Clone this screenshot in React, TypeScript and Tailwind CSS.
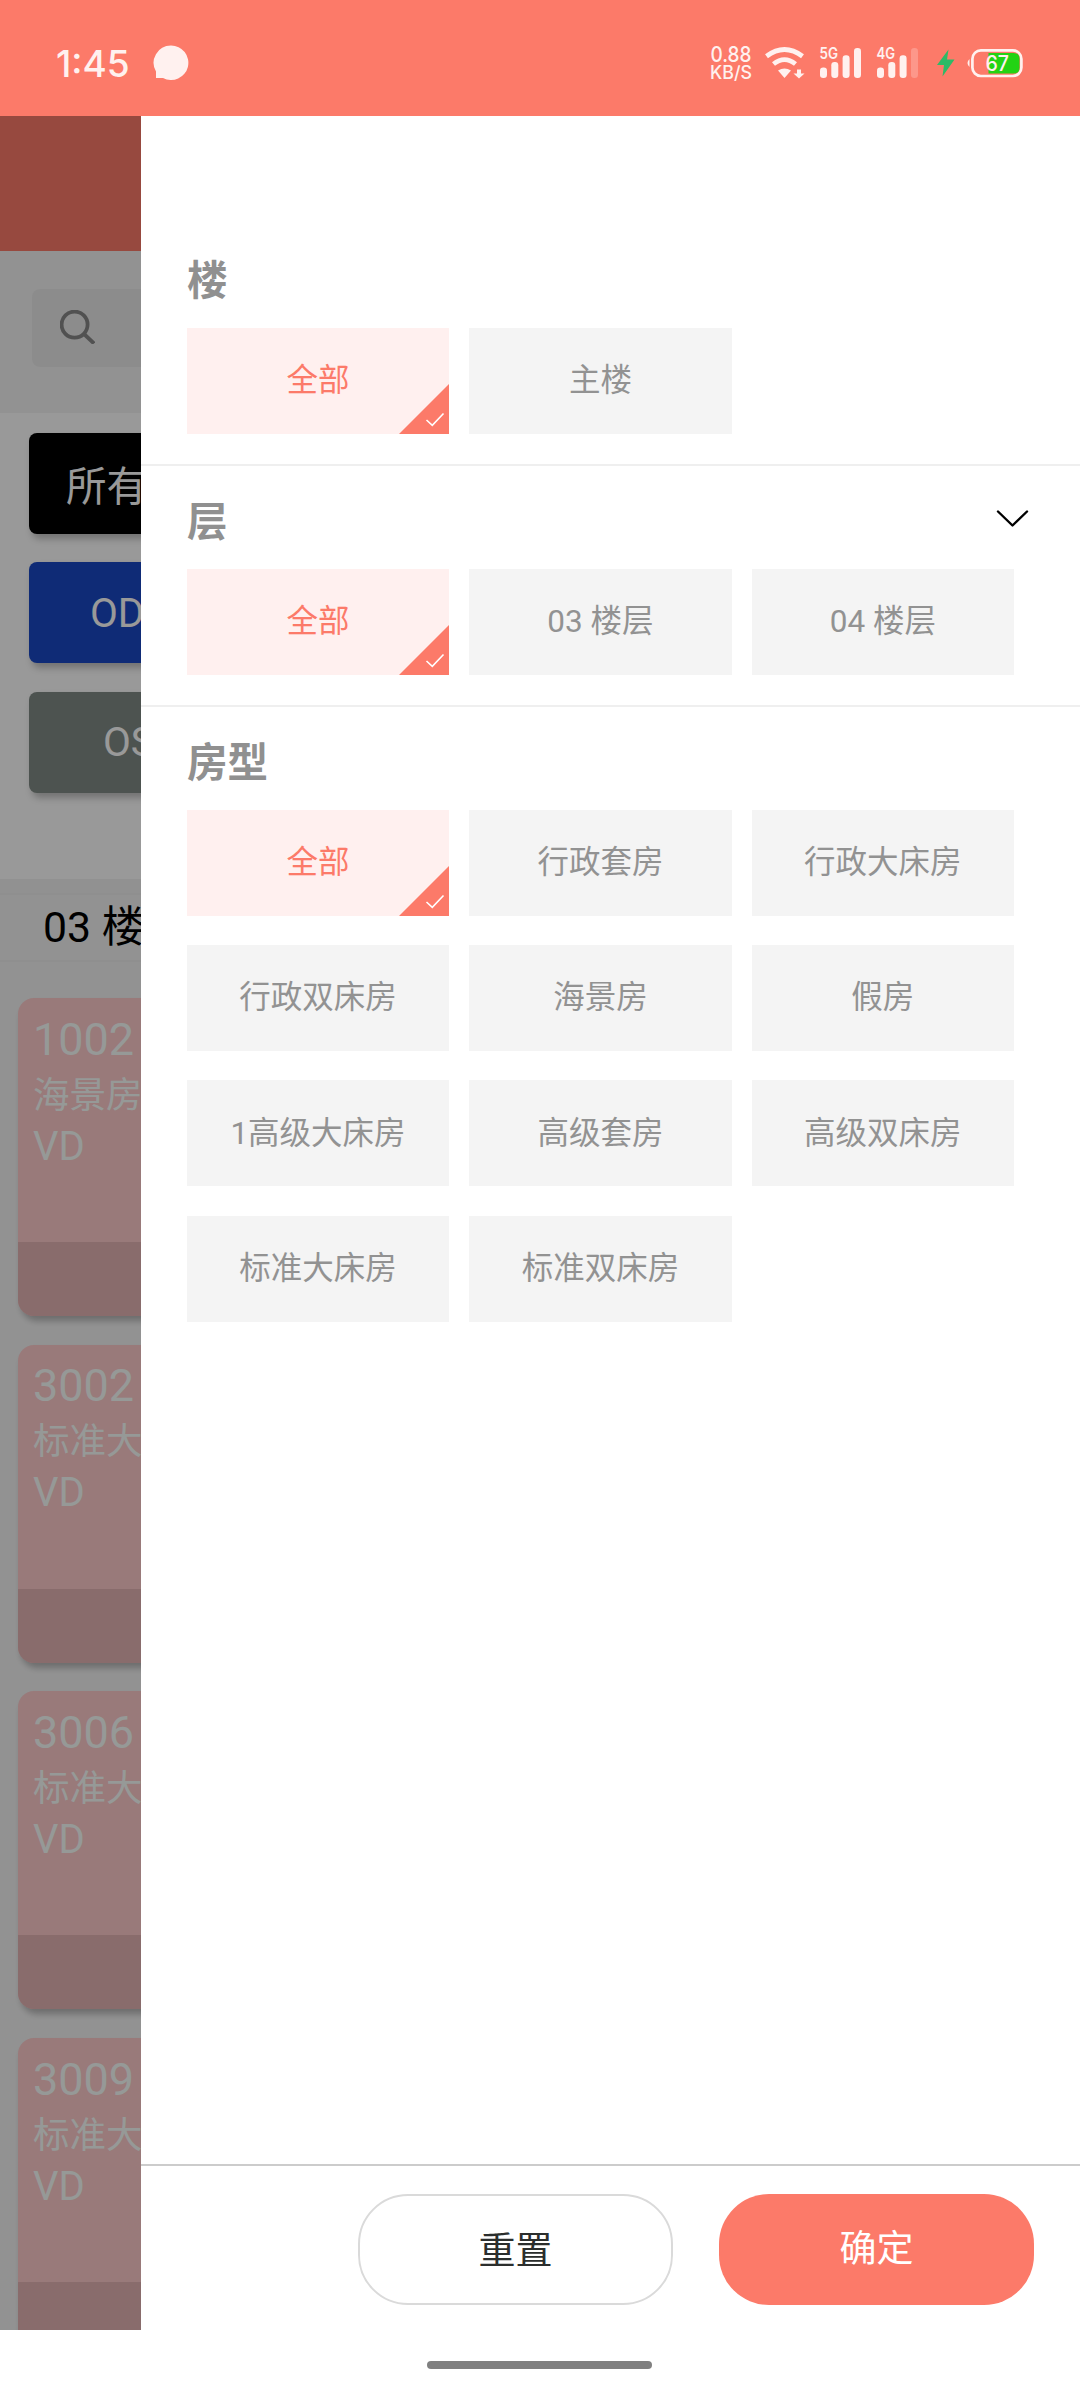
import React, { useState } from "react";

const statusFilters = [
  { label: "所有", className: "bg-black pt-[7px] pl-[37px]" },
  { label: "OD", className: "bg-[#1948c5] pl-[61px]" },
  { label: "OS", className: "bg-[#808a85] pl-[74px]" },
];

const rooms = [
  { number: "1002", type: "海景房", status: "VD" },
  { number: "3002", type: "标准大床房", status: "VD" },
  { number: "3006", type: "标准大床房", status: "VD" },
  { number: "3009", type: "标准大床房", status: "VD" },
];

const buildings = ["全部", "主楼"];
const floors = ["全部", "03 楼层", "04 楼层"];
const roomTypes = [
  "全部",
  "行政套房",
  "行政大床房",
  "行政双床房",
  "海景房",
  "假房",
  "1高级大床房",
  "高级套房",
  "高级双床房",
  "标准大床房",
  "标准双床房",
];

function Signal({ label, weak }: { label: string; weak?: boolean }) {
  return (
    <svg className="overflow-visible" width="42" height="32" viewBox="0 0 42 32" fill="#fff1ef">
      <text x="-0.5" y="12.2" fontSize="15.5" fontWeight="600" textLength="18.5" lengthAdjust="spacingAndGlyphs">
        {label}
      </text>
      <rect x="0" y="20.5" width="7" height="10.5" rx="3.2" />
      <rect x="11.3" y="15" width="7" height="16" rx="3.2" />
      <rect x="22.6" y="8.3" width="7" height="22.7" rx="3.2" />
      <rect x="34" y="1" width="7" height="30" rx="3.2" opacity={weak ? 0.25 : 1} />
    </svg>
  );
}

function StatusBar() {
  return (
    <header className="flex h-[116px] items-center bg-[#fc7a69] pt-[10px] pl-[56px] font-[Inter,sans-serif] text-[#fff1ef]">
      <span className="w-[97px] text-[37px] leading-none font-medium">1:45</span>
      <svg width="36" height="36" viewBox="0 0 36 36" fill="#fff1ef">
        <path d="M18 .5a17.3 17.3 0 1 1-8 32.6H3v-6.6A17.3 17.3 0 0 1 18 .5Z" />
      </svg>
      <svg className="ml-[520px] overflow-visible" width="56" height="36" viewBox="0 0 56 36" fill="#fff1ef" fontWeight="500">
        <text x="1.5" y="17" fontSize="21.5" textLength="41" lengthAdjust="spacingAndGlyphs">
          0.88
        </text>
        <text x="1" y="33.5" fontSize="18" textLength="42" lengthAdjust="spacingAndGlyphs">
          KB/S
        </text>
      </svg>
      <svg width="40" height="32" viewBox="0 0 40 32" fill="none">
        <g stroke="#fff1ef" strokeWidth="4.8">
          <path d="M1.5 9.2Q19.5-4.2 37.5 9.2" />
          <path d="M8.5 17Q19.5 8.2 30.5 17" />
        </g>
        <path d="M13 23.5q6.5-4 13 0L19.5 31Z" fill="#fff1ef" />
        <path d="M32 22.5h4v4h3.5L34 31.5l-5.5-5H32Z" fill="#fff1ef" />
      </svg>
      <div className="ml-[15px] flex gap-[15px]">
        <Signal label="5G" />
        <Signal label="4G" weak />
      </div>
      <svg className="ml-[17px]" width="20" height="28" viewBox="0 0 20 28" fill="#2dba66">
        <path d="M12.5.5 1 16h7L6.500 27.500 18.500 10.500H11Z" />
      </svg>
      <svg className="ml-[10px]" width="58" height="32" viewBox="0 0 58 32">
        <path d="M3.500 12v8q-4-4 0-8Z" fill="#fff1ef" />
        <rect x="6.400" y="3.400" width="49" height="25.600" rx="8.500" fill="none" stroke="#fff1ef" strokeWidth="2.700" />
        <path d="M22.500 6h25q6 0 6 6v8.500q0 6-6 6h-25Z" fill="#22d314" />
        <text x="19.500" y="23.800" fontSize="21" fontWeight="500" fill="#fff1ef" textLength="23.500" lengthAdjust="spacingAndGlyphs">
          67
        </text>
      </svg>
    </header>
  );
}

function RoomList() {
  return (
    <div className="relative h-full w-[141px] shrink-0 overflow-hidden bg-[#f4f4f4] whitespace-nowrap">
      <div className="h-[135px] bg-[#fc7a69]" />
      <div className="h-[162px] pt-[38px] pl-8">
        <div className="flex h-[78px] w-[600px] items-center rounded-lg bg-[#eaeaea] pl-7">
          <svg className="-mt-[2px]" width="35" height="34" viewBox="0 0 35 34" fill="none" stroke="#888" strokeWidth="3.800">
            <circle cx="14.600" cy="14.600" r="13" />
            <path d="m24 24 10 9.500" />
          </svg>
        </div>
      </div>

      <div className="flex h-[466px] flex-col gap-[28.400px] bg-white pt-5 pl-[29px]">
        {statusFilters.map((filter) => (
          <div
            key={filter.label}
            className={`flex h-[101px] w-[312px] items-center rounded-lg text-[40.5px] leading-none text-white shadow-[3px_5px_7px_rgba(0,0,0,0.25)] ${filter.className}`}
          >
            {filter.label}
          </div>
        ))}
      </div>

      <div className="h-[14px] bg-[#f2f2f2]" />
      <div className="flex h-[69px] items-center border-y-2 border-[#efefef] bg-[#f4f4f4] pl-[43px] text-[42.750px] leading-none text-black">
        03 楼层
      </div>

      <div className="flex flex-col gap-[28.700px] pt-9 pl-[18px]">
        {rooms.map((room) => (
          <div
            key={room.number}
            className="flex h-[318px] w-[330px] shrink-0 flex-col overflow-hidden rounded-2xl bg-[#ffcbcb] text-[#fafffc] shadow-[3px_5px_6px_rgba(0,0,0,0.25)]"
          >
            <div className="h-[244px] pt-[14.500px] pl-[15px]">
              <div className="text-[45px] leading-[54px]">{room.number}</div>
              <div className="pt-px text-[36.500px] leading-[56px]">{room.type}</div>
              <div className="-mt-px text-[40px] leading-[48px]">{room.status}</div>
            </div>
            <div className="grow bg-[#e5b4b4]" />
          </div>
        ))}
      </div>

      <div className="absolute inset-0 bg-black/40" />
    </div>
  );
}

interface FilterSectionProps {
  title: string;
  options: string[];
  collapsible?: boolean;
  last?: boolean;
}

function FilterSection({ title, options, collapsible, last }: FilterSectionProps) {
  const [selected, setSelected] = useState(options[0]);

  return (
    <section className={`pt-[33px] pb-[30px] pl-[46px] ${last ? "" : "border-b-2 border-[#efefef]"}`}>
      <div className="mb-6 flex h-[46px] items-center justify-between pr-[51px]">
        <h2 className="text-[40.5px] leading-[46px] font-bold text-[#909090]">{title}</h2>
        {collapsible && (
          <svg className="-mt-[7px]" width="33" height="18" viewBox="0 0 33 18" fill="none" stroke="#000" strokeWidth="2.400" strokeLinecap="round" strokeLinejoin="round">
            <path d="M2 1.500 16.500 15.500 31 1.500" />
          </svg>
        )}
      </div>
      <div className="grid grid-cols-[262px_262.500px_262px] gap-x-[20.200px] gap-y-[29.200px]">
        {options.map((option) => (
          <button
            key={option}
            type="button"
            onClick={() => setSelected(option)}
            className={`relative h-[106px] text-[31.5px] leading-none ${
              option === selected ? "bg-[#fff0ef] text-[#fc7a69]" : "bg-[#f4f4f4] text-[#929292]"
            }`}
          >
            {option}
            {option === selected && (
              <svg className="absolute right-0 bottom-0" width="50" height="50" viewBox="0 0 50 50">
                <path d="M50 0v50H0Z" fill="#fc7a69" />
                <path d="m27.500 36 5.800 5.300L44.500 29.500" fill="none" stroke="#fff" strokeWidth="1.600" />
              </svg>
            )}
          </button>
        ))}
      </div>
    </section>
  );
}

function FilterDrawer() {
  return (
    <aside className="flex h-full grow flex-col bg-white">
      <div className="grow pt-[109px]">
        <FilterSection title="楼" options={buildings} />
        <FilterSection title="层" options={floors} collapsible />
        <FilterSection title="房型" options={roomTypes} last />
      </div>
      <div className="flex h-[166px] justify-end gap-[46px] border-t-2 border-[#ccc] pt-7 pr-[46px] text-[37px] leading-none">
        <button type="button" className="h-[111px] w-[315px] rounded-[50px] border-2 border-[#dadada] pt-[3px] text-[#2b2e2d]">
          重置
        </button>
        <button type="button" className="h-[111px] w-[315px] rounded-[50px] bg-[#fc7a69] pb-px text-white">
          确定
        </button>
      </div>
    </aside>
  );
}

export default function App() {
  return (
    <div className="flex h-[2400px] w-[1080px] flex-col overflow-hidden bg-white font-[Roboto,'Noto_Sans_CJK_SC',sans-serif]">
      <StatusBar />
      <main className="flex h-[2214px] shrink-0">
        <RoomList />
        <FilterDrawer />
      </main>
      <div className="flex grow justify-center pt-[31px] pr-[2px]">
        <div className="h-2 w-[225px] rounded-full bg-[#808080]" />
      </div>
    </div>
  );
}
